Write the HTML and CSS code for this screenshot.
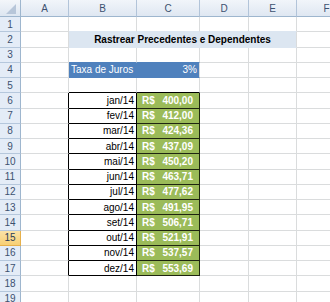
FILE: index.html
```html
<!DOCTYPE html>
<html lang="pt">
<head>
<meta charset="utf-8">
<link rel="stylesheet" href="styles.css">
</head>
<body>
<div class="sheet">
  <div class="corner"><svg width="20" height="16" viewBox="0 0 20 16"><polygon points="16,4 16,14 6,14" fill="#b7c6d9"/></svg></div>
  <div class="ch">A</div><div class="ch">B</div><div class="ch">C</div><div class="ch">D</div><div class="ch">E</div><div class="ch last">F</div>

  <div class="rh">1</div><div class="c"></div><div class="c b-title"></div><div class="c b-title"></div><div class="c b-title"></div><div class="c b-title"></div><div class="c"></div>
  <div class="rh">2</div><div class="c"></div><div class="c title">Rastrear Precedentes e Dependentes</div><div class="c"></div>
  <div class="rh">3</div><div class="c"></div><div class="c b-blue"></div><div class="c b-blue"></div><div class="c"></div><div class="c"></div><div class="c"></div>
  <div class="rh">4</div><div class="c"></div><div class="c rate-l">Taxa de Juros</div><div class="c rate-r">3%</div><div class="c"></div><div class="c"></div><div class="c"></div>
  <div class="rh">5</div><div class="c"></div><div class="c top"></div><div class="c top"></div><div class="c"></div><div class="c"></div><div class="c"></div>

  <div class="rh">6</div><div class="c edge"></div><div class="c d">jan/14</div><div class="c v"><span>R$</span><span>400,00</span></div><div class="c"></div><div class="c"></div><div class="c"></div>
  <div class="rh">7</div><div class="c edge"></div><div class="c d">fev/14</div><div class="c v"><span>R$</span><span>412,00</span></div><div class="c"></div><div class="c"></div><div class="c"></div>
  <div class="rh">8</div><div class="c edge"></div><div class="c d">mar/14</div><div class="c v"><span>R$</span><span>424,36</span></div><div class="c"></div><div class="c"></div><div class="c"></div>
  <div class="rh">9</div><div class="c edge"></div><div class="c d">abr/14</div><div class="c v"><span>R$</span><span>437,09</span></div><div class="c"></div><div class="c"></div><div class="c"></div>
  <div class="rh">10</div><div class="c edge"></div><div class="c d">mai/14</div><div class="c v"><span>R$</span><span>450,20</span></div><div class="c"></div><div class="c"></div><div class="c"></div>
  <div class="rh">11</div><div class="c edge"></div><div class="c d">jun/14</div><div class="c v"><span>R$</span><span>463,71</span></div><div class="c"></div><div class="c"></div><div class="c"></div>
  <div class="rh">12</div><div class="c edge"></div><div class="c d">jul/14</div><div class="c v"><span>R$</span><span>477,62</span></div><div class="c"></div><div class="c"></div><div class="c"></div>
  <div class="rh">13</div><div class="c edge"></div><div class="c d">ago/14</div><div class="c v"><span>R$</span><span>491,95</span></div><div class="c"></div><div class="c"></div><div class="c"></div>
  <div class="rh">14</div><div class="c edge"></div><div class="c d">set/14</div><div class="c v"><span>R$</span><span>506,71</span></div><div class="c"></div><div class="c"></div><div class="c"></div>
  <div class="rh active">15</div><div class="c edge"></div><div class="c d">out/14</div><div class="c v"><span>R$</span><span>521,91</span></div><div class="c"></div><div class="c"></div><div class="c"></div>
  <div class="rh">16</div><div class="c edge"></div><div class="c d">nov/14</div><div class="c v"><span>R$</span><span>537,57</span></div><div class="c"></div><div class="c"></div><div class="c"></div>
  <div class="rh">17</div><div class="c edge"></div><div class="c d">dez/14</div><div class="c v"><span>R$</span><span>553,69</span></div><div class="c"></div><div class="c"></div><div class="c"></div>

  <div class="rh">18</div><div class="c"></div><div class="c"></div><div class="c"></div><div class="c"></div><div class="c"></div><div class="c"></div>
  <div class="rh">19</div><div class="c"></div><div class="c"></div><div class="c"></div><div class="c"></div><div class="c"></div><div class="c"></div>
</div>
</body>
</html>
```

FILE: styles.css
```css
html, body {
  margin: 0;
  padding: 0;
  background: #ffffff;
  overflow: hidden;
}

.sheet {
  display: grid;
  grid-template-columns: 21px 48px 68px 63px 49px 48px 60px;
  grid-template-rows: 17px repeat(19, 15.25px);
  width: 330px;
  height: 302px;
  overflow: hidden;
  font-family: "Liberation Sans", Arial, sans-serif;
  font-size: 10px;
  color: #000;
}

.sheet > div {
  box-sizing: border-box;
  min-width: 0;
  overflow: hidden;
  white-space: nowrap;
}

.corner {
  background: linear-gradient(#f3f6fa, #dde6f1);
  border-right: 1px solid #9eb6ce;
  border-bottom: 1px solid #9eb6ce;
}
.corner svg { display: block; }

.ch {
  background: linear-gradient(#f1f5fa, #dfe7f2);
  border-right: 1px solid #b2c4d9;
  border-bottom: 1px solid #9eb6ce;
  color: #3c5170;
  display: flex;
  align-items: center;
  justify-content: center;
  font-size: 10px;
}

.rh {
  background: #e4ecf7;
  border-right: 1px solid #9eb6ce;
  border-bottom: 1px solid #b5c7dc;
  color: #3c5170;
  display: flex;
  align-items: center;
  justify-content: center;
  font-size: 10px;
}
.rh.active {
  background: linear-gradient(#fbe3a8, #f7cf74);
  border-right-color: #e6b04b;
  border-bottom-color: #e6b04b;
  color: #2b3c55;
}

.c {
  border-right: 1px solid #dadcdd;
  border-bottom: 1px solid #dadcdd;
  display: flex;
  align-items: center;
}

.b-title { border-bottom-color: #dce6f1; }
.b-blue { border-bottom-color: #4f81bd; }

.title {
  grid-column: span 4;
  background: #dce6f1;
  border-bottom-color: #dce6f1;
  justify-content: center;
  font-weight: bold;
}

.rate-l {
  background: #4f81bd;
  border-right-color: #4f81bd;
  border-bottom-color: #4f81bd;
  color: #fff;
  padding-left: 2px;
}
.rate-r {
  background: #4f81bd;
  border-bottom-color: #4f81bd;
  color: #fff;
  justify-content: flex-end;
  padding-right: 2px;
}

.top { border-bottom-color: #000; }
.edge { border-right-color: #000; }

.d {
  border-right-color: #000;
  border-bottom-color: #000;
  justify-content: flex-end;
  padding-right: 2px;
}

.v {
  background: #9bbb59;
  border-right-color: #1e2410;
  border-bottom-color: #1e2410;
  color: #fff;
  font-weight: bold;
  justify-content: space-between;
  padding: 0 6px 0 5px;
}
```
